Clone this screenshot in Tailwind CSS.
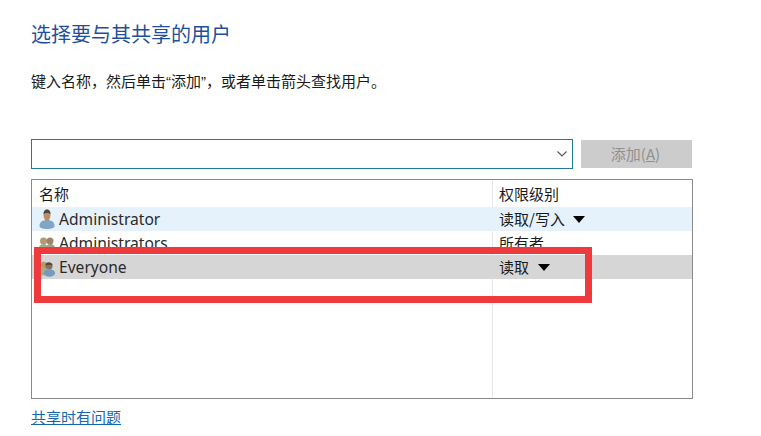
<!DOCTYPE html>
<html lang="zh-CN">
<head>
<meta charset="utf-8">
<script src="https://cdn.jsdelivr.net/npm/@tailwindcss/browser@4"></script>
</head>
<body class="bg-white">
<div class="relative w-[761px] h-[436px] overflow-hidden bg-white pl-[31px] font-['Noto_Sans_CJK_SC',sans-serif] text-[#1a1a1a]">
  <h1 class="pt-[21px] h-[58px] text-[20px] leading-[26px] font-normal text-[#1f4f9a]">选择要与其共享的用户</h1>
  <p class="h-[81px] pt-[13px] text-[15px] leading-[20px]">键入名称，然后单击<span class="font-['Liberation_Sans']">“</span>添加<span class="font-['Liberation_Sans']">”</span>，或者单击箭头查找用户。</p>
  <div class="flex items-center gap-2 w-[662px] h-[30px]">
    <div class="flex items-center justify-end w-[542px] h-[30px] border border-[#1f7a9e] pr-[5px]">
      <svg width="10" height="6" viewBox="0 0 10 6" fill="none" stroke="#555" stroke-width="1.1"><path d="M.5 .5 5 5 9.500 .5"/></svg>
    </div>
    <button class="flex items-center justify-center w-[111px] h-[28px] pr-[2px] bg-[#cccccc] text-[#909090] text-[15px]">添加(<span class="underline">A</span>)</button>
  </div>
  <div class="relative mt-[10px] w-[662px] h-[220px] border border-[#8a8a8a]">
    <div class="absolute left-[460px] top-0 bottom-0 w-px bg-[#e6e6e6]"></div>
    <div class="relative flex items-center h-[27px] pt-[2px] text-[15px]">
      <div class="w-[460px] pl-[7px]">名称</div>
      <div class="pl-[7px]">权限级别</div>
    </div>
    <div class="relative flex items-center h-[24px] bg-[#e5f1fb]">
      <div class="flex items-center w-[460px] pl-[7px] gap-[4px]">
        <svg width="16" height="20" viewBox="0 0 16 20"><path d="M0.500 17c0-4 3-6 7.500-6s7.500 2 7.500 6c0 2-3 3-7.500 3S.5 19 .5 17z" fill="#7fa6c6"/><path d="M4.500 5.500C4.500 2 6 .5 8 .5s3.500 1.500 3.500 5-1.500 6.500-3.500 6.500-3.500-3-3.500-6.500z" fill="#b98f68"/><path d="M4.500 5C4.500 2 6 .5 8 .5s3.500 1.500 3.500 4.500C10 3.500 6 3.500 4.500 5z" fill="#4f463e"/></svg>
        <span class="pt-[2px] font-['Noto_Sans'] text-[15.6px] text-[#2a2a2a]">Administrator</span>
      </div>
      <div class="flex items-center pl-[7px] gap-[8px] text-[15px]">读取/写入
        <svg width="12" height="7" viewBox="0 0 12 7"><path d="M0 0h12L6 7z" fill="#000"/></svg>
      </div>
    </div>
    <div class="relative flex items-center h-[24px]">
      <div class="flex items-center w-[460px] pl-[7px] gap-[4px]">
        <svg width="16" height="20" viewBox="0 0 16 20"><ellipse cx="4.500" cy="15" rx="4.500" ry="4" fill="#a7ab82"/><circle cx="4.500" cy="8" r="3.500" fill="#b49a70"/><ellipse cx="11.500" cy="15" rx="4.500" ry="4" fill="#9aa08a"/><circle cx="11" cy="8" r="3.500" fill="#a08468"/></svg>
        <span class="pt-[2px] font-['Noto_Sans'] text-[15.6px] text-[#2a2a2a]">Administrators</span>
      </div>
      <div class="pl-[7px] text-[15px]">所有者</div>
    </div>
    <div class="relative flex items-center h-[24px] bg-[#d6d6d6]">
      <div class="flex items-center w-[460px] pl-[7px] gap-[4px]">
        <svg width="16" height="20" viewBox="0 0 16 20"><ellipse cx="4.500" cy="14.500" rx="4.500" ry="4" fill="#a7ab82"/><circle cx="5" cy="8" r="3.200" fill="#b49a70"/><ellipse cx="10.500" cy="16" rx="5.500" ry="3.800" fill="#6f9cc0"/><circle cx="10" cy="9" r="3.500" fill="#8a6f58"/><path d="M6.500 8.500C6.500 6 8 5.500 10 5.500s3.500 1 3.500 3c-2-1-5-1-7 0z" fill="#4f463e"/></svg>
        <span class="pt-[2px] font-['Noto_Sans'] text-[15.6px] text-[#2a2a2a]">Everyone</span>
      </div>
      <div class="flex items-center pl-[7px] gap-[9px] text-[15px]">读取
        <svg width="12" height="7" viewBox="0 0 12 7"><path d="M0 0h12L6 7z" fill="#000"/></svg>
      </div>
    </div>
  </div>
  <a class="block mt-[9px] w-fit text-[#1468b0] underline text-[15px] leading-[18px]">共享时有问题</a>
  <div class="absolute left-[34px] top-[247px] w-[558px] h-[56px] border-[7px] border-[#ef3a3d]"></div>
</div>
</body>
</html>
